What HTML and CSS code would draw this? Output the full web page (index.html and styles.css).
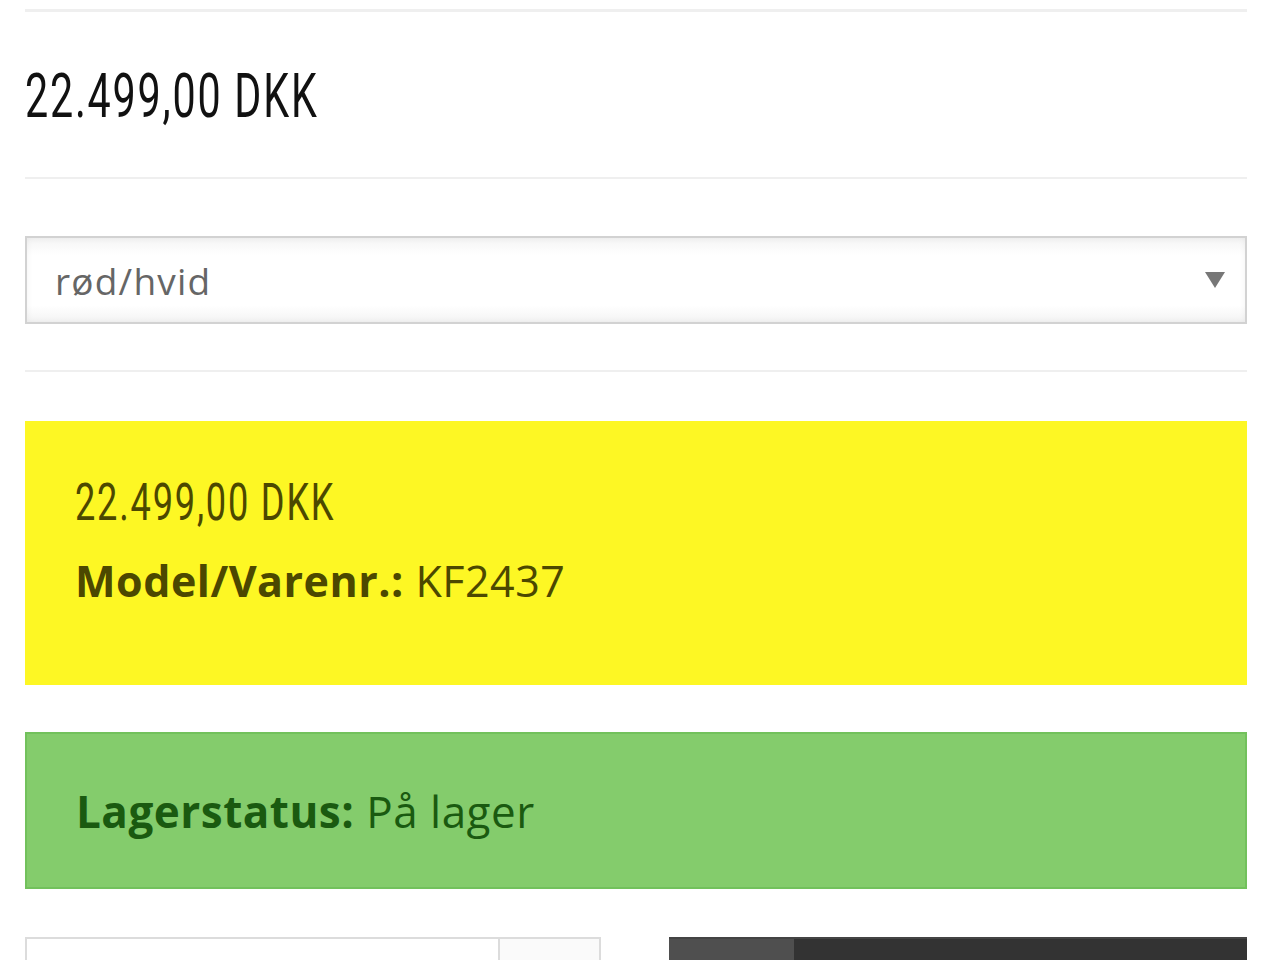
FILE: index.html
```html
<!DOCTYPE html>
<html lang="da">
<head>
<meta charset="utf-8">
<title>Produkt</title>
<link rel="stylesheet" href="styles.css">
</head>
<body>
<div class="page">
  <hr class="rule rule-top">
  <div class="price"><span class="narrow">22.499,00 DKK</span></div>
  <hr class="rule rule-mid">
  <div class="select">
    <span class="select-value">rød/hvid</span>
    <span class="select-arrow"></span>
  </div>
  <hr class="rule rule-low">
  <div class="box box-yellow">
    <div class="box-price"><span class="narrow">22.499,00 DKK</span></div>
    <div class="box-line"><b>Model/Varenr.:</b> KF2437</div>
  </div>
  <div class="box box-green">
    <div class="box-line"><b>Lagerstatus:</b> På lager</div>
  </div>
  <div class="buy-row">
    <div class="qty">
      <div class="qty-input"></div>
      <div class="qty-side"></div>
    </div>
    <div class="buy-btn">
      <div class="buy-icon"></div>
      <div class="buy-label"></div>
    </div>
  </div>
</div>
</body>
</html>
```

FILE: styles.css
```css
html, body {
  margin: 0;
  padding: 0;
  background: #fff;
}
.page {
  width: 1222px;
  margin-left: 25px;
  display: flex;
  flex-direction: column;
}
.rule {
  border: 0;
  margin: 0;
  background: #efefef;
}
.rule-top {
  height: 3px;
  margin-top: 9px;
}
.narrow {
  display: inline-block;
  transform: scaleX(0.665);
  transform-origin: left center;
  white-space: nowrap;
  letter-spacing: 2.7px;
}
.price {
  font-family: Roboto, "Liberation Sans", sans-serif;
  font-weight: 400;
  font-size: 62px;
  line-height: 62px;
  color: #111;
  margin-top: 53px;
  height: 62px;
}
.rule-mid {
  height: 2px;
  margin-top: 50px;
}
.select {
  margin-top: 57px;
  height: 82px;
  border: 2px solid #d2d2d2;
  background: linear-gradient(#f4f4f4, #ffffff 20%, #ffffff 80%, #f4f4f4);
  box-shadow: inset 0 0 6px rgba(0,0,0,0.06);
  display: flex;
  align-items: center;
  justify-content: space-between;
  padding: 2px 20px 0 28px;
  box-sizing: content-box;
}
.select-value {
  font-family: "Open Sans", "Noto Sans", sans-serif;
  font-size: 37px;
  line-height: 82px;
  color: #666;
  letter-spacing: 1.2px;
}
.select-arrow {
  width: 0;
  height: 0;
  border-left: 10px solid transparent;
  border-right: 10px solid transparent;
  border-top: 16px solid #777;
  margin-top: -2px;
}
.rule-low {
  height: 2px;
  margin-top: 46px;
}
.box {
  box-sizing: border-box;
  padding-left: 50px;
}
.box-yellow {
  margin-top: 49px;
  height: 264px;
  background: #fdf724;
  padding-top: 56px;
}
.box-price {
  font-family: Roboto, "Liberation Sans", sans-serif;
  font-weight: 400;
  font-size: 52px;
  line-height: 52px;
  height: 52px;
  color: #4c4800;
}
.box-price .narrow {
  transform: scaleX(0.695);
  letter-spacing: 2.6px;
}
.box-line {
  font-family: "Open Sans", "Noto Sans", sans-serif;
  font-size: 43px;
  line-height: 52px;
  letter-spacing: 0.5px;
}
.box-yellow .box-line {
  color: #4c4800;
  margin-top: 26px;
}
.box-line b {
  font-weight: 700;
}
.box-green {
  margin-top: 47px;
  height: 157px;
  background: #84cc6c;
  border: 2px solid #72c15c;
  padding-top: 51px;
}
.box-green .box-line {
  color: #1a5a10;
  font-size: 44px;
  padding-left: 0;
  margin-left: -1px;
}
.buy-row {
  margin-top: 48px;
  display: flex;
  justify-content: space-between;
}
.qty {
  width: 576px;
  height: 60px;
  display: flex;
  border: 2px solid #dcdcdc;
  border-bottom: 0;
  box-sizing: border-box;
}
.qty-input {
  flex: 1;
  background: #fff;
}
.qty-side {
  width: 99px;
  border-left: 2px solid #dcdcdc;
  background: #fafafa;
}
.buy-btn {
  width: 578px;
  height: 60px;
  display: flex;
  background: #333;
  border-top: 2px solid #444;
  box-sizing: border-box;
}
.buy-icon {
  width: 125px;
  background: #4f4f4f;
}
.buy-label {
  flex: 1;
}
```
